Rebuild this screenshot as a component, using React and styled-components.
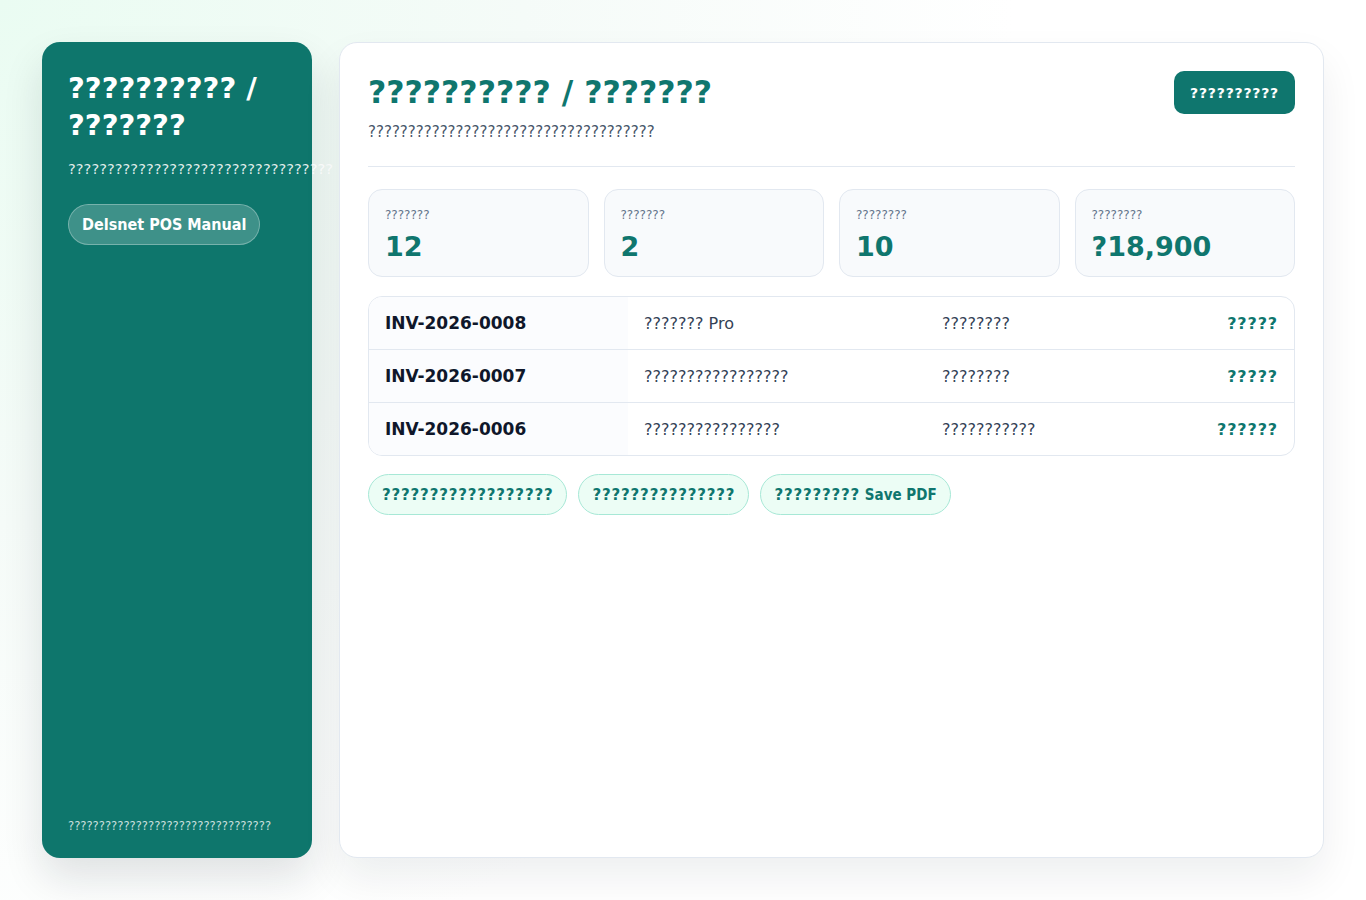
import React from 'react'
import styled, { createGlobalStyle } from 'styled-components'

const GlobalStyle = createGlobalStyle`
  html, body {
    margin: 0;
    padding: 0;
  }
  body {
    font-family: "DejaVu Sans", Verdana, sans-serif;
    background: radial-gradient(circle at 0% 0%, #eafcf2 0%, #f5fbf8 32%, #ffffff 62%);
    min-height: 100vh;
  }
`

const teal = '#0f766e'

const Wide = styled.span`
  font-family: "DejaVu Sans", sans-serif;
  letter-spacing: 0.055em;
`

const withWide = text =>
  text.split(/(\?+)/).map((part, i) =>
    part.startsWith('?') ? <Wide key={i}>{part}</Wide> : part
  )

const Page = styled.div`
  display: flex;
  gap: 27px;
  padding: 42px 42px 42px 42px;
  height: 100vh;
  box-sizing: border-box;
`

const Sidebar = styled.aside`
  width: 270px;
  flex-shrink: 0;
  background: #0e766c;
  border-radius: 18px;
  padding: 28px 26px 25px;
  box-sizing: border-box;
  display: flex;
  flex-direction: column;
  color: #ffffff;
  box-shadow: 0 20px 40px rgba(15, 23, 42, 0.12);
`

const SideTitle = styled.h1`
  margin: 0;
  font-size: 29px;
  line-height: 37px;
  font-weight: 700;
`

const SideText = styled.p`
  margin: 16px 0 0;
  font-size: 14.7px;
  white-space: nowrap;
  color: rgba(255, 255, 255, 0.88);
`

const PillLink = styled.a`
  align-self: flex-start;
  margin-top: 27px;
  padding: 0 13px;
  height: 41px;
  display: flex;
  align-items: center;
  border-radius: 999px;
  background: rgba(255, 255, 255, 0.2);
  border: 1px solid rgba(255, 255, 255, 0.3);
  color: #ffffff;
  font-family: "DejaVu Sans Condensed", "DejaVu Sans", sans-serif;
  font-weight: 700;
  font-size: 16px;
  text-decoration: none;
  box-sizing: border-box;
`

const SideFooter = styled.div`
  margin-top: auto;
  font-size: 11.6px;
  color: rgba(255, 255, 255, 0.78);
`

const Main = styled.main`
  flex: 1;
  background: #ffffff;
  border: 1px solid #e2e8f0;
  border-radius: 18px;
  padding: 28px 28px;
  box-sizing: border-box;
  box-shadow: 0 20px 40px rgba(15, 23, 42, 0.07);
  display: flex;
  flex-direction: column;
`

const Header = styled.header`
  display: flex;
  justify-content: space-between;
  align-items: flex-start;
  padding-bottom: 25px;
  border-bottom: 1px solid #e2e8f0;
`

const Title = styled.h2`
  margin: 2px 0 0;
  font-size: 31.5px;
  line-height: 38px;
  color: ${teal};
  font-weight: 700;
`

const Subtitle = styled.p`
  margin: 12px 0 0;
  font-size: 15px;
  color: #475569;
`

const PrimaryButton = styled.button`
  height: 43px;
  padding: 0 16px;
  border: none;
  border-radius: 10px;
  background: ${teal};
  color: #ffffff;
  font-family: "DejaVu Sans Condensed", "DejaVu Sans", sans-serif;
  font-weight: 700;
  font-size: 14px;
`

const Stats = styled.div`
  display: grid;
  grid-template-columns: repeat(4, 1fr);
  gap: 15px;
  margin-top: 22px;
`

const StatCard = styled.div`
  background: #f8fafc;
  border: 1px solid #e2e8f0;
  border-radius: 14px;
  padding: 18px 16px 14px;
  height: 88px;
  box-sizing: border-box;
`

const StatLabel = styled.div`
  font-size: 12px;
  color: #64748b;
`

const StatValue = styled.div`
  margin-top: 8px;
  font-size: 27px;
  font-weight: 700;
  color: ${teal};
  line-height: 34px;
`

const Table = styled.div`
  margin-top: 19px;
  border: 1px solid #e2e8f0;
  border-radius: 14px;
  overflow: hidden;
`

const Row = styled.div`
  display: grid;
  grid-template-columns: 259px 298px 1fr auto;
  height: 52px;
  align-items: stretch;
  & + & {
    border-top: 1px solid #e2e8f0;
  }
`

const Cell = styled.div`
  display: flex;
  align-items: center;
  padding: 0 16px;
  font-size: 16px;
  color: #334155;
`

const IdCell = styled(Cell)`
  background: #fbfcfe;
  font-size: 17px;
  font-weight: 700;
  color: #0f172a;
`

const AmountCell = styled(Cell)`
  justify-content: flex-end;
  font-weight: 700;
  color: ${teal};
`

const Chips = styled.div`
  display: flex;
  gap: 11px;
  margin-top: 18px;
`

const Chip = styled.button`
  height: 41px;
  padding: 0 13px;
  border-radius: 999px;
  background: #ecfdf5;
  border: 1px solid #a7e8d6;
  color: ${teal};
  font-family: "DejaVu Sans Condensed", "DejaVu Sans", sans-serif;
  font-weight: 700;
  font-size: 15px;
`

const stats = [
  { label: '???????', value: '12' },
  { label: '???????', value: '2' },
  { label: '????????', value: '10' },
  { label: '????????', value: '?18,900' },
]

const rows = [
  { id: 'INV-2026-0008', name: '??????? Pro', status: '????????', amount: '?????' },
  { id: 'INV-2026-0007', name: '?????????????????', status: '????????', amount: '?????' },
  { id: 'INV-2026-0006', name: '????????????????', status: '???????????', amount: '??????' },
]

const chips = ['??????????????????', '???????????????', '????????? Save PDF']

export default function App() {
  return (
    <>
      <GlobalStyle />
      <Page>
        <Sidebar>
          <SideTitle>?????????? / ???????</SideTitle>
          <SideText>??????????????????????????????????</SideText>
          <PillLink href="#">Delsnet POS Manual</PillLink>
          <SideFooter>?????????????????????????????????</SideFooter>
        </Sidebar>
        <Main>
          <Header>
            <div>
              <Title>?????????? / ???????</Title>
              <Subtitle>????????????????????????????????????</Subtitle>
            </div>
            <PrimaryButton>{withWide('??????????')}</PrimaryButton>
          </Header>
          <Stats>
            {stats.map((s, i) => (
              <StatCard key={i}>
                <StatLabel>{s.label}</StatLabel>
                <StatValue>{s.value}</StatValue>
              </StatCard>
            ))}
          </Stats>
          <Table>
            {rows.map(r => (
              <Row key={r.id}>
                <IdCell>{r.id}</IdCell>
                <Cell>{r.name}</Cell>
                <Cell>{r.status}</Cell>
                <AmountCell>{withWide(r.amount)}</AmountCell>
              </Row>
            ))}
          </Table>
          <Chips>
            {chips.map(c => (
              <Chip key={c}>{withWide(c)}</Chip>
            ))}
          </Chips>
        </Main>
      </Page>
    </>
  )
}
